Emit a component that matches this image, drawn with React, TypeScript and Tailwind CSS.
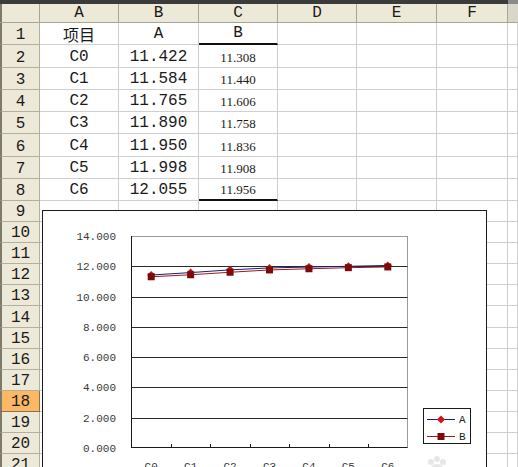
import React from "react";

const mono = { fontFamily: '"Liberation Mono", "Noto Sans CJK SC", monospace' };
const serif = { fontFamily: '"Liberation Serif", serif' };
const cjk = { fontFamily: '"Noto Sans CJK SC", sans-serif' };

const cats = ["C0", "C1", "C2", "C3", "C4", "C5", "C6"];
const seriesA = [11.422, 11.584, 11.765, 11.89, 11.95, 11.998, 12.055];
const seriesB = [11.308, 11.44, 11.606, 11.758, 11.836, 11.908, 11.956];

// column widths (px), last one fills the rest
const colDefs = [
  { name: "A", w: "w-[79px]" },
  { name: "B", w: "w-[80px]" },
  { name: "C", w: "w-[79px]" },
  { name: "D", w: "w-[79px]" },
  { name: "E", w: "w-[80px]" },
  { name: "F", w: "w-[71px]" },
];

// chart geometry in page coordinates
const PL = 131.5;
const PR = 407.5;
const PT = 236;
const PB = 448;
const step = (PR - PL) / 7;
const yOf = (v: number) => PB - (v * (PB - PT)) / 14;
const xOf = (i: number) => PL + step * (i + 0.5);

function Chart() {
  const grid = [0, 2, 4, 6, 8, 10, 12, 14];
  const ptsA = seriesA.map((v, i) => `${xOf(i)},${yOf(v)}`).join(" ");
  const ptsB = seriesB.map((v, i) => `${xOf(i)},${yOf(v)}`).join(" ");
  return (
    <div className="absolute left-[42px] top-[210px] w-[445px] h-[300px] border border-[#1c1c1c] bg-white">
      <svg width="443" height="298" className="block">
        <g transform="translate(-43 -211)">
          {/* plot frame */}
          <line x1={PL} y1={PT + 0.5} x2={PR} y2={PT + 0.5} stroke="#9a9a9a" />
          <line x1={PR} y1={PT} x2={PR} y2={PB} stroke="#9a9a9a" />
          {grid.slice(1, 7).map((g) => (
            <line
              key={g}
              x1={PL}
              x2={PR}
              y1={Math.round(yOf(g)) + 0.5}
              y2={Math.round(yOf(g)) + 0.5}
              stroke="#2a2a2a"
            />
          ))}
          <line x1={PL} y1={PT} x2={PL} y2={PB} stroke="#1a1a1a" />
          <line x1={PL} y1={PB - 0.5} x2={PR} y2={PB - 0.5} stroke="#1a1a1a" />
          {cats.slice(1).map((_, i) => (
            <line
              key={i}
              x1={Math.round(PL + step * (i + 1)) + 0.5}
              x2={Math.round(PL + step * (i + 1)) + 0.5}
              y1={PB - 4}
              y2={PB}
              stroke="#1a1a1a"
            />
          ))}
          {/* y labels */}
          {grid.map((g) => (
            <text
              key={g}
              x={116}
              y={yOf(g) + 4}
              textAnchor="end"
              fontSize="11"
              fill="#3a3a3a"
              style={mono}
            >
              {`${g}.000`}
            </text>
          ))}
          {/* x labels */}
          {cats.map((c, i) => (
            <text
              key={c}
              x={xOf(i)}
              y={470}
              textAnchor="middle"
              fontSize="11"
              fill="#3a3a3a"
              style={mono}
            >
              {c}
            </text>
          ))}
          {/* series */}
          <polyline points={ptsA} fill="none" stroke="#1b1b7a" strokeWidth="1" />
          <polyline points={ptsB} fill="none" stroke="#9b1b1b" strokeWidth="1" />
          {seriesA.map((v, i) => (
            <polygon
              key={i}
              points={`${xOf(i)},${yOf(v) - 4} ${xOf(i) + 4},${yOf(v)} ${xOf(i)},${yOf(v) + 4} ${xOf(i) - 4},${yOf(v)}`}
              fill="#c81414"
            />
          ))}
          {seriesB.map((v, i) => (
            <rect key={i} x={xOf(i) - 3.5} y={yOf(v) - 3.5} width="7" height="7" fill="#7d0a0a" />
          ))}
          {/* legend */}
          <rect x={423.5} y={408.5} width={47} height={35} fill="white" stroke="#1a1a1a" />
          <line x1={427} x2={455} y1={419.5} y2={419.5} stroke="#1b1b7a" />
          <polygon points="441,415.5 445,419.5 441,423.5 437,419.5" fill="#d41414" />
          <text x={459} y={423} fontSize="11" fill="#222" style={mono}>
            A
          </text>
          <line x1={427} x2={455} y1={436.5} y2={436.5} stroke="#9b1b1b" />
          <rect x={437.5} y={433} width="7" height="7" fill="#7d0a0a" />
          <text x={459} y={440} fontSize="11" fill="#222" style={mono}>
            B
          </text>
          {/* faint watermark */}
          <g fill="#e6e6e6">
            <circle cx={431} cy={462} r={3} />
            <circle cx={437} cy={459} r={3} />
            <circle cx={443} cy={462} r={3} />
            <ellipse cx={437} cy={468} rx={6} ry={4} />
          </g>
        </g>
      </svg>
    </div>
  );
}

const tableRows: string[][] = [
  ["项目", "A", "B"],
  ["C0", "11.422", "11.308"],
  ["C1", "11.584", "11.440"],
  ["C2", "11.765", "11.606"],
  ["C3", "11.890", "11.758"],
  ["C4", "11.950", "11.836"],
  ["C5", "11.998", "11.908"],
  ["C6", "12.055", "11.956"],
];

export default function App() {
  const rows = Array.from({ length: 21 }, (_, i) => i + 1);
  return (
    <div className="relative w-[518px] h-[467px] overflow-hidden bg-white text-[#1a1a1a]">
      <div className="h-[4px] bg-[#3b3b3b] flex">
        <div className="flex-1" />
        <div className="w-[10px] bg-[#8a8a8a]" />
      </div>
      {/* column headers */}
      <div className="flex h-[19px] bg-[#ece9d8] border-b border-[#a9a594]" style={mono}>
        <div className="w-[40px] shrink-0 border-r border-[#a9a594] border-l-2 border-l-[#7d7a6c]" />
        {colDefs.map((c) => (
          <div
            key={c.name}
            className={`${c.w} shrink-0 border-r border-[#a9a594] flex items-center justify-center text-[16px] leading-none`}
          >
            {c.name}
          </div>
        ))}
        <div className="flex-1 bg-[#d9d6cb]" />
      </div>
      {/* rows */}
      {rows.map((r) => {
        const data = tableRows[r - 1];
        const hi = r === 18;
        const h = r <= 8 ? "h-[22.25px]" : "h-[21.1px]";
        return (
          <div key={r} className={`flex ${h}`}>
            <div
              className={`w-[40px] shrink-0 border-l-2 border-l-[#7d7a6c] border-r border-b flex items-end justify-center pb-[1px] text-[16px] leading-none ${
                hi ? "bg-[#fbb865] border-[#8f6d45]" : "bg-[#ece9d8] border-[#b3af9f]"
              }`}
              style={mono}
            >
              {r}
            </div>
            {colDefs.map((c, ci) => {
              const txt = data ? data[ci] : undefined;
              const thick = ci === 2 && (r === 1 || r === 8);
              return (
                <div
                  key={c.name}
                  className={`${c.w} shrink-0 border-r border-[#cfcfcf] flex items-end justify-center leading-none ${
                    thick ? "border-b-2 border-b-[#111]" : "border-b border-b-[#cfcfcf]"
                  } ${ci === 2 && r > 1 ? "text-[13px] pb-[3px]" : "text-[16px] pb-[2px]"}`}
                  style={ci === 0 && r === 1 ? cjk : ci === 2 && r > 1 ? serif : mono}
                >
                  {txt}
                </div>
              );
            })}
            <div className="flex-1 border-b border-[#cfcfcf] border-r" />
          </div>
        );
      })}
      <Chart />
    </div>
  );
}
